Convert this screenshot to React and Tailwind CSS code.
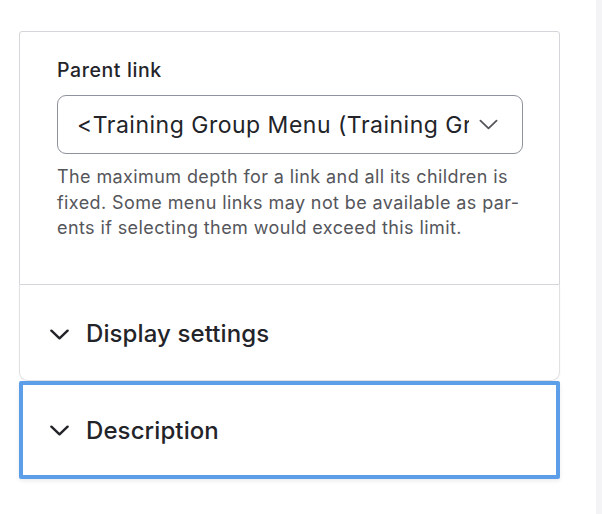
import React from "react";

function Chevron({ className, sw = 2.4 }) {
  return (
    <svg viewBox="0 0 20 11" className={className} fill="none" stroke="currentColor" strokeWidth={sw} strokeLinecap="round" strokeLinejoin="round">
      <path d="M1.5 1.5L10 9.5L18.5 1.5" />
    </svg>
  );
}

export default function App() {
  return (
    <div className="flex h-[514px] w-[602px] bg-white" style={{ fontFamily: "Inter, 'Noto Sans', sans-serif" }}>
      <div className="flex-1 pt-[31px] pl-[19px] pr-[36px]">
        <div className="w-[541px]">
          <div className="h-[254px] rounded-t-[3px] border border-[#d6d6da] px-[37px] pt-[25px]">
            <div className="text-[19.5px] font-medium leading-[26px] tracking-[0.6px] text-[#232429]">Parent link</div>
            <div className="mt-[12px] flex h-[59px] w-[466px] items-center justify-between rounded-[9px] border border-[#8e929c] pl-[19px] pr-[24px]">
              <span className="overflow-hidden whitespace-nowrap text-[23px] leading-[30px] tracking-[0.5px] text-[#232429]" style={{ width: 392 }}>&lt;Training Group Menu (Training Group Menu)&gt;</span>
              <Chevron className="h-[11px] w-[19px] text-[#55565b]" sw={1.9} />
            </div>
            <p className="mt-[10px] whitespace-nowrap text-[18px] leading-[25.5px] tracking-[0.4px] text-[#55565b]">
              The maximum depth for a link and all its children is<br />fixed. Some menu links may not be available as par-<br />ents if selecting them would exceed this limit.
            </p>
          </div>
          <div className="flex h-[96px] items-center rounded-b-[9px] border-x border-b border-[#e1e1e4] pt-[3px] pl-[30px] shadow-[0_1px_2px_rgba(0,0,0,0.06)]">
            <Chevron className="h-[11px] w-[19px] text-[#232429]" sw={2.6} />
            <span className="ml-[17px] text-[24px] font-medium tracking-[0.1px] text-[#232429]">Display settings</span>
          </div>
          <div className="flex h-[98px] items-center rounded-[2px] border-[4px] border-[#5c9ee8] pt-[1px] pl-[27px] shadow-[0_2px_4px_rgba(0,0,0,0.08)]">
            <Chevron className="h-[11px] w-[19px] text-[#232429]" sw={2.6} />
            <span className="ml-[17px] text-[24px] font-medium tracking-[0.1px] text-[#232429]">Description</span>
          </div>
        </div>
      </div>
      <div className="w-[6px] bg-[#f4f4f6]" />
    </div>
  );
}
